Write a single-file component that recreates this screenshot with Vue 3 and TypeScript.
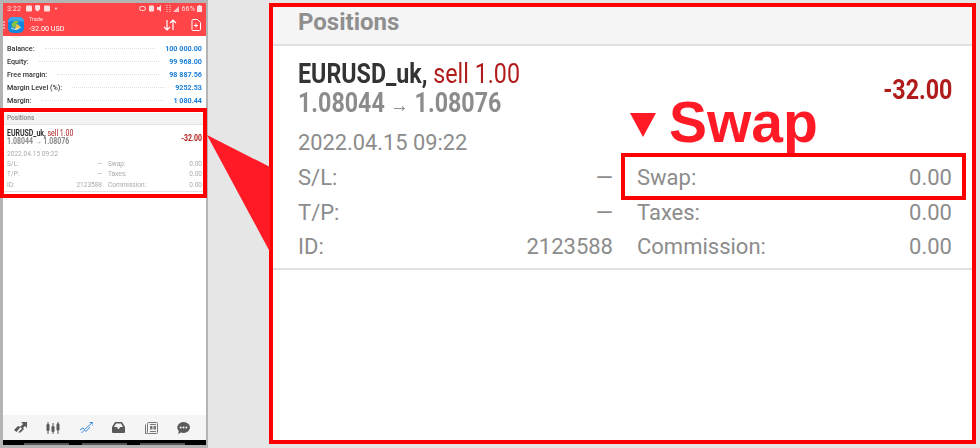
<template>
  <div class="page">
    <section class="phone">
      <header class="appbar">
        <div class="status">
          <div class="status-left">
            <span>3:22</span>
            <svg width="31" height="7" viewBox="0 0 31 7">
              <path d="M1 .5h4q1 0 1 1v4q0 1-1 1h-4q-1 0-1-1v-4q0-1 1-1z" fill="#ffe0e0" />
              <path d="M9 .5l2.500-.5 2.500 .5v3q0 2-2.500 3q-2.500-1-2.500-3z" fill="#ffe0e0" />
              <rect x="18" y=".5" width="6" height="6" rx="1" fill="#ffe0e0" />
              <circle cx="30" cy="3.500" r="1" fill="#ffe0e0" />
            </svg>
          </div>
          <div class="status-right">
            <svg width="40" height="7" viewBox="0 0 40 7">
              <rect x=".5" y="1.500" width="6" height="4" rx="2" fill="none" stroke="#ffe0e0" />
              <rect x="10" y=".5" width="5" height="6" rx="1" fill="#ffe0e0" />
              <path d="M18 2h2l2-2v7l-2-2h-2z" fill="#ffe0e0" />
              <path d="M28 0v7M31 0v7" stroke="#ffe0e0" stroke-dasharray="1 1" />
              <path d="M34 7l6-6v6z" fill="#ffe0e0" opacity=".8" />
            </svg>
            <span>66%</span>
            <svg width="5" height="7" viewBox="0 0 5 7"><path d="M1.500 0h2v1h1.500v6h-5v-6h1.500z" fill="#ffe0e0" /></svg>
          </div>
        </div>
        <div class="toolbar">
          <svg class="burger" width="2" height="8" viewBox="0 0 2 8"><path d="M0 1h2M0 4h2M0 7h2" stroke="#fff" /></svg>
          <svg class="logo" width="16" height="16" viewBox="0 0 16 16">
            <rect width="16" height="16" rx="5" fill="#1287dd" />
            <path d="M0 5q0-5 5-5h6q5 0 5 5-8-3-16 0z" fill="#3fa6ea" />
            <path d="M3.500 8q1-4.500 5.500-4.500l2 2-2.500 1-1.500 3.500-2 1z" fill="#7cc243" />
            <path d="M8 7q3 0 4 2.500-1.500 3.500-5 3.500z" fill="#eec247" />
            <path d="M3 11q5 3 10-1" fill="none" stroke="#fff" stroke-width=".8" />
          </svg>
          <div class="title">
            <small>Trade</small>
            <span>-32.00 USD</span>
          </div>
          <svg class="sort" width="14" height="12" viewBox="0 0 14 12">
            <path d="M4 1v10M1 8l3 3 3-3M10 11V1M7 4l3-3 3 3" fill="none" stroke="#fff" stroke-width="1.200" />
          </svg>
          <svg class="add" width="10" height="12" viewBox="0 0 10 12">
            <path d="M1 1.500q0-1 1-1h4.500l3 3v7q0 1-1 1h-6.500q-1 0-1-1z M3 6.500h4M5 4.500v4" fill="none" stroke="#fff" />
          </svg>
        </div>
      </header>

      <ul class="balances">
        <li v-for="row in balances" :key="row.label">
          <span>{{ row.label }}</span>
          <i></i>
          <b>{{ row.value }}</b>
        </li>
      </ul>

      <div class="mini">
        <div class="mini-head">Positions</div>
        <div class="mini-body">
          <div class="mini-top">
            <div>
              <p class="mini-sym"><b>EURUSD_uk,</b> <span>sell 1.00</span></p>
              <p class="mini-price">1.08044 <em>→</em> 1.08076</p>
            </div>
            <b class="mini-profit">-32.00</b>
          </div>
          <p class="mini-date">2022.04.15 09:22</p>
          <div class="mini-grid">
            <template v-for="cell in cells" :key="cell.label">
              <div class="mini-cell"><span>{{ cell.label }}</span><span>{{ cell.value }}</span></div>
            </template>
          </div>
        </div>
      </div>

      <div class="spacer"></div>

      <nav class="tabs">
        <svg width="13" height="11" viewBox="0 0 13 11">
          <path d="M0 8l4-4 2.500 1-4 5z M4 10.500l4-4-2-1.500 1-1 3 3-3.500 3.500z M7 0h6v6l-2-2-2 2-2-2 2-2z" fill="#5a5a5a" />
        </svg>
        <svg width="14" height="12" viewBox="0 0 14 12">
          <path d="M2 0v12M7 1v11M12 0v12" stroke="#5a5a5a" />
          <rect x=".5" y="2" width="3" height="7" rx="1.200" fill="#5a5a5a" />
          <rect x="5.500" y="4" width="3" height="6" rx="1.200" fill="#5a5a5a" />
          <rect x="10.500" y="1.500" width="3" height="7" rx="1.200" fill="#5a5a5a" />
        </svg>
        <svg width="13" height="12" viewBox="0 0 13 12">
          <path d="M0 8l3-2 1.500 1.500L12 1M1.500 11l3-3 1.500 1.500L10 5M9.500 .5H13V4" fill="none" stroke="#3b8fe0" />
        </svg>
        <svg width="13" height="11" viewBox="0 0 13 11">
          <path d="M3 0h7l3 5v5q0 1-1 1h-11q-1 0-1-1v-5z M2 5h3l1 2h1l1-2h3l-2-3.500h-5z" fill="#5a5a5a" fill-rule="evenodd" />
        </svg>
        <svg width="13" height="12" viewBox="0 0 13 12">
          <rect x="2.500" y=".5" width="10" height="11" rx="1" fill="none" stroke="#777" />
          <path d="M.5 2.500v9h2" fill="none" stroke="#777" />
          <rect x="5" y="4" width="2.500" height="3.500" fill="#777" />
          <rect x="8.500" y="4" width="2.500" height="3.500" fill="#777" />
          <path d="M5 2.500h6M5 9.500h6" stroke="#777" />
        </svg>
        <svg width="13" height="12" viewBox="0 0 13 12">
          <path d="M6.500 0a6.500 5.500 0 1 1-2.500 10.600l-3 1.400 .8-3a6.500 5.500 0 0 1 4.700-9z" fill="#5a5a5a" />
          <circle cx="3.700" cy="5.500" r="1" fill="#f5f5f5" />
          <circle cx="6.500" cy="5.500" r="1" fill="#f5f5f5" />
          <circle cx="9.300" cy="5.500" r="1" fill="#f5f5f5" />
        </svg>
      </nav>
      <div class="softkeys"><i></i><i></i><i></i></div>
    </section>

    <section class="detail">
      <div class="detail-head">Positions</div>
      <div class="detail-body">
        <div class="detail-top">
          <div>
            <p class="symbol"><b>EURUSD_uk,</b> <span>sell 1.00</span></p>
            <p class="price">1.08044 <em>→</em> 1.08076</p>
          </div>
          <b class="profit">-32.00</b>
        </div>
        <p class="date">2022.04.15 09:22</p>
        <div class="detail-grid">
          <template v-for="cell in cells" :key="cell.label">
            <div class="cell"><span>{{ cell.label }}</span><span>{{ cell.value }}</span></div>
          </template>
        </div>
      </div>
    </section>

    <!-- annotations drawn over the screenshot -->
    <div class="mini-frame"></div>
    <svg class="wedge" width="64" height="120" viewBox="0 0 64 120">
      <polygon points="0,0 63,32 63,117" fill="#ff1a25" />
    </svg>
    <div class="swap-callout">
      <svg width="26" height="24" viewBox="0 0 26 24"><polygon points="0,0 26,0 13,24" fill="#ff1a25" /></svg>
      <span>Swap</span>
    </div>
    <div class="swap-frame"></div>
  </div>
</template>

<script setup lang="ts">
const balances = [
  { label: 'Balance:', value: '100 000.00' },
  { label: 'Equity:', value: '99 968.00' },
  { label: 'Free margin:', value: '98 887.56' },
  { label: 'Margin Level (%):', value: '9252.53' },
  { label: 'Margin:', value: '1 080.44' },
]

const cells = [
  { label: 'S/L:', value: '—' },
  { label: 'Swap:', value: '0.00' },
  { label: 'T/P:', value: '—' },
  { label: 'Taxes:', value: '0.00' },
  { label: 'ID:', value: '2123588' },
  { label: 'Commission:', value: '0.00' },
]
</script>

<style>
body {
  margin: 0;
}
</style>

<style scoped>
.page {
  position: relative;
  display: flex;
  width: 980px;
  height: 448px;
  overflow: hidden;
  background: #e6e6e6;
  font-family: Roboto, "Liberation Sans", sans-serif;
}

p {
  margin: 0;
}

em {
  font-style: normal;
  font-weight: 400;
}

.phone {
  display: flex;
  flex-direction: column;
  box-sizing: border-box;
  width: 208px;
  height: 448px;
  padding: 3px 2px 3px 3px;
  background: #b4b4b4;
  filter: blur(.3px);
  flex: none;
}

.appbar {
  height: 33px;
  background: #ff4548;
  color: #fff;
  flex: none;
}

.status {
  display: flex;
  justify-content: space-between;
  align-items: center;
  height: 10px;
  padding: 0 4px 0 4px;
  font-size: 7.300px;
  color: #ffe0e0;
}

.status-left,
.status-right {
  display: flex;
  align-items: center;
  gap: 2px;
}

.status-left {
  gap: 5px;
}

.toolbar {
  display: flex;
  align-items: center;
  height: 23px;
}

.burger {
  margin-right: 3px;
}

.logo {
  margin-right: 5px;
}

.title {
  display: flex;
  flex-direction: column;
  flex: 1;
  line-height: 10px;
  font-size: 8px;
}

.title small {
  font-size: 5.500px;
  line-height: 9px;
  opacity: .85;
}

.title span {
  transform: scaleX(.9);
  transform-origin: left center;
}

.sort {
  margin-right: 14px;
}

.add {
  margin-right: 5px;
}

.balances {
  margin: 0;
  padding: 6px 4px 3px 4px;
  list-style: none;
  background: #fff;
  flex: none;
}

.balances li {
  display: flex;
  align-items: center;
  height: 13px;
  font-size: 7.200px;
  font-weight: 500;
  color: #333;
}

.balances i {
  flex: 1;
  margin: 0 10px;
  border-bottom: 1px dotted #ddd;
}

.balances b {
  color: #1a7fd8;
  font-weight: 700;
}

.mini {
  flex: none;
  margin: 0;
  padding-top: 3px;
  background: #fff;
}

.mini-head {
  height: 11px;
  padding: 0 4px;
  background: #f3f3f3;
  border-bottom: 1px solid #e2e2e2;
  font-size: 6.500px;
  font-weight: 500;
  line-height: 11px;
  color: #888;
}

.mini-body {
  box-sizing: border-box;
  height: 67px;
  padding: 4px 1px 0 4px;
  border-bottom: 1px solid #e2e2e2;
}

.mini-top {
  display: flex;
  justify-content: space-between;
  align-items: center;
}

.mini-sym,
.mini-price {
  font-size: 8.400px;
  transform: scaleX(.83);
  transform-origin: left center;
  white-space: nowrap;
}

.mini-sym {
  line-height: 8px;
  color: #b01c1c;
}

.mini-sym b {
  color: #333;
}

.mini-price {
  line-height: 9px;
  font-weight: 700;
  color: #888;
}

.mini-profit {
  margin-right: 3px;
  font-size: 8.400px;
  color: #b01c1c;
  transform: scaleX(.83);
  transform-origin: right center;
}

.mini-date {
  margin-top: 4px;
  font-size: 6.600px;
  line-height: 8px;
  color: #aaa;
}

.mini-grid {
  display: grid;
  grid-template-columns: 95px 94px;
  column-gap: 6px;
  margin-top: 1px;
}

.mini-cell {
  display: flex;
  justify-content: space-between;
  height: 10.400px;
  font-size: 6.500px;
  line-height: 10px;
  color: #aaa;
}

.spacer {
  flex: 1;
  background: #fff;
}

.tabs {
  display: flex;
  justify-content: space-between;
  align-items: center;
  height: 25px;
  padding: 0 16px 0 11px;
  background: #f5f5f5;
  flex: none;
}

.softkeys {
  display: flex;
  justify-content: center;
  gap: 13px;
  height: 5px;
  background: #000;
  flex: none;
}

.softkeys i {
  width: 45px;
  height: 2px;
  margin-top: 3px;
  background: #555;
}

.detail {
  box-sizing: border-box;
  width: 707px;
  height: 441px;
  margin: 3px 0 0 61px;
  border: 4px solid #f00;
  background: #fff;
  flex: none;
}

.detail-head {
  box-sizing: border-box;
  height: 39px;
  padding-left: 25px;
  background: #f5f5f5;
  border-bottom: 2px solid #e0e0e0;
  font-size: 24px;
  font-weight: 700;
  line-height: 31px;
  color: #8f8f8f;
}

.detail-body {
  box-sizing: border-box;
  height: 224px;
  padding: 13px 20px 0 25px;
  border-bottom: 2px solid #e0e0e0;
}

.detail-top {
  display: flex;
  justify-content: space-between;
  align-items: center;
}

.symbol,
.price {
  font-size: 28px;
  line-height: 29px;
  transform: scaleX(.83);
  transform-origin: left center;
  white-space: nowrap;
}

.symbol {
  color: #b01c1c;
}

.symbol b {
  color: #333;
}

.price {
  font-weight: 700;
  color: #8c8c8c;
}

.price em {
  font-size: 22px;
}

.profit {
  font-size: 28px;
  color: #b01c1c;
  transform: scaleX(.83);
  transform-origin: right center;
}

.date {
  margin-top: 11px;
  font-size: 21.800px;
  line-height: 26px;
  color: #8c8c8c;
}

.detail-grid {
  display: grid;
  grid-template-columns: 315px 315px;
  column-gap: 24px;
  margin-top: 5px;
}

.cell {
  display: flex;
  justify-content: space-between;
  height: 34.500px;
  font-size: 22px;
  line-height: 34px;
  color: #8c8c8c;
}

.mini-frame {
  position: absolute;
  left: 0;
  top: 108px;
  box-sizing: border-box;
  width: 207px;
  height: 90px;
  border: 4px solid #f00;
}

.wedge {
  position: absolute;
  left: 207px;
  top: 135px;
}

.swap-callout {
  position: absolute;
  left: 630px;
  top: 89px;
  display: flex;
  align-items: center;
  gap: 13px;
  color: #ff1a25;
  font-family: "Liberation Sans", Arial, sans-serif;
  font-size: 57px;
  font-weight: 700;
  line-height: 66px;
}

.swap-callout svg {
  margin-top: 6px;
}

.swap-frame {
  position: absolute;
  left: 621px;
  top: 153px;
  box-sizing: border-box;
  width: 345px;
  height: 47px;
  border: 4px solid #f00;
}
</style>
